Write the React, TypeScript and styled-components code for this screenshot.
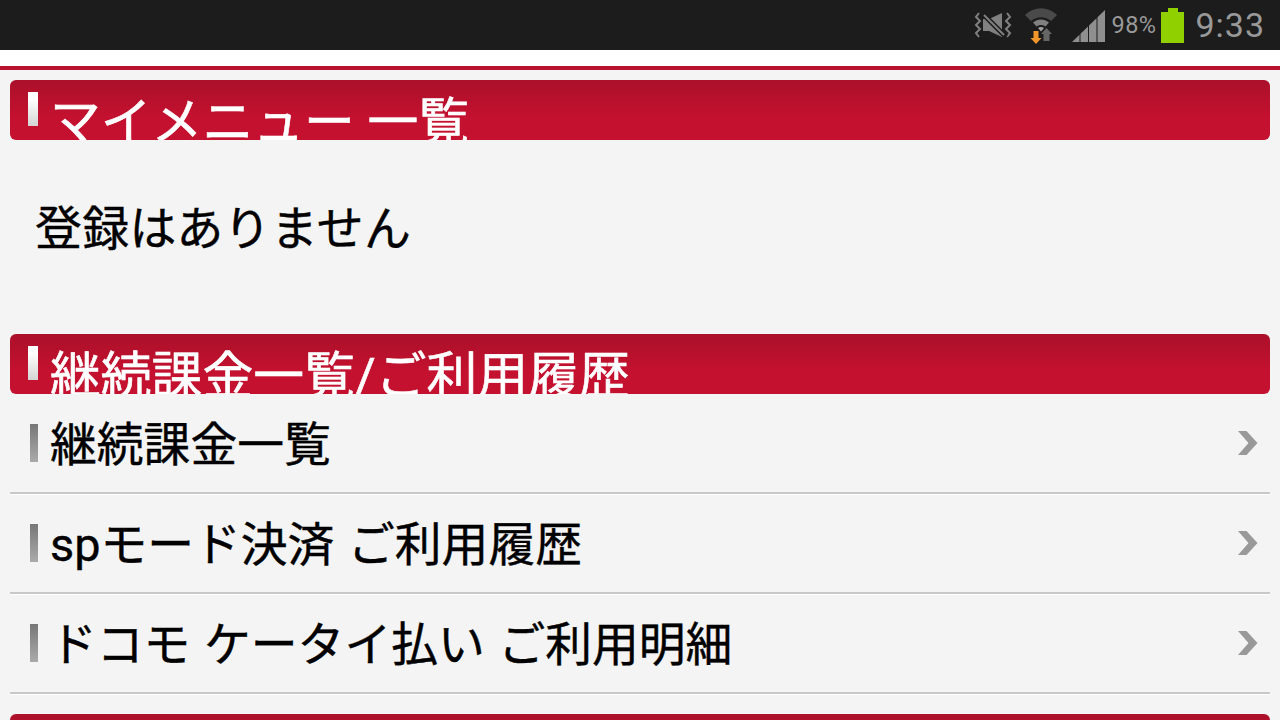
import React from 'react';
import styled, { createGlobalStyle } from 'styled-components';

const FONT = `Roboto, "Noto Sans CJK JP", sans-serif`;

const GlobalStyle = createGlobalStyle`
  html, body {
    margin: 0;
    padding: 0;
    background: #f4f4f4;
  }
  body {
    width: 1280px;
    height: 720px;
    overflow: hidden;
    font-family: ${FONT};
  }
`;

const Page = styled.div`
  display: flex;
  flex-direction: column;
  width: 1280px;
  height: 720px;
  overflow: hidden;
  background: #f4f4f4;
`;

const StatusBar = styled.div`
  flex: none;
  display: flex;
  align-items: center;
  justify-content: flex-end;
  height: 50px;
  padding-right: 15px;
  background: #1c1c1c;
  color: #999999;
`;

const StatusIcon = styled.svg<{ $gap: number }>`
  display: block;
  flex: none;
  margin-right: ${(props) => props.$gap}px;
`;

const Percent = styled.span`
  margin-right: 5px;
  font-size: 23.5px;
  letter-spacing: 0.4px;
`;

const Clock = styled.span`
  margin-left: 11px;
  font-size: 34px;
  line-height: 50px;
  letter-spacing: 1px;
`;

const TopStrip = styled.div`
  flex: none;
  height: 16px;
  background: #ffffff;
  border-bottom: 4px solid #b9122f;
`;

const Content = styled.main`
  display: flex;
  flex-direction: column;
  padding: 10px 10px 0;
`;

const SectionHeader = styled.h2`
  flex: none;
  display: flex;
  align-items: flex-start;
  height: 60px;
  margin: 0;
  padding: 12px 0 0 18px;
  box-sizing: border-box;
  overflow: hidden;
  border-radius: 6px;
  background: linear-gradient(#ab102a, #c3112f 60%, #c3112f);
  color: #ffffff;
  font-size: 50.8px;
  font-weight: 400;
  line-height: 61px;
  white-space: pre;
  -webkit-text-stroke: 0.6px #ffffff;
`;

const HeaderMark = styled.span`
  flex: none;
  width: 10px;
  height: 34px;
  margin-right: 12px;
  background: linear-gradient(#ffffff 20%, #d4d4d4);
`;

const EmptyNote = styled.p`
  flex: none;
  height: 194px;
  margin: 0;
  padding-left: 25px;
  color: #000000;
  font-size: 46.8px;
  letter-spacing: 0.4px;
  line-height: 178px;
  -webkit-text-stroke: 0.4px #000000;
`;

const MenuList = styled.ul`
  flex: none;
  margin: 0 0 20px;
  padding: 0;
  list-style: none;
`;

const MenuRow = styled.li`
  display: flex;
  align-items: center;
  height: 100px;
  padding: 0 12px 0 20px;
  box-sizing: border-box;
  border-bottom: 2px solid #c8c8c8;
  box-shadow: 0 1px 0 #ffffff;
  color: #000000;
  font-size: 46.8px;
  word-spacing: 2px;
  white-space: pre;
`;

const RowMark = styled.span`
  flex: none;
  width: 8px;
  height: 38px;
  margin-right: 12px;
  background: linear-gradient(#777777, #aaaaaa);
`;

const RowLabel = styled.span`
  flex: 1;
  padding-bottom: 6px;
  -webkit-text-stroke: 0.4px #000000;
`;

const Chevron = () => (
  <svg width="20" height="24" viewBox="0 0 20 24">
    <path d="M0 0H8.5L19.5 12L8.5 24H0L10.500 12Z" fill="#999999" />
  </svg>
);

const MuteIcon = () => (
  <StatusIcon $gap={13} width="38" height="26" viewBox="0 0 38 26">
    <g fill="none" stroke="#808080" strokeWidth="2">
      <path d="M5 1L2 5L6 9L2 13L6 17L2 21L5 25" />
      <path d="M33 1L36 5L32 9L36 13L32 17L36 21L33 25" />
    </g>
    <path d="M9 7H15L28 1V25L15 19H9Z" fill="#808080" />
    <path d="M8 1L32 25" stroke="#1c1c1c" strokeWidth="5" />
    <path d="M10 3L30 23" stroke="#808080" strokeWidth="2" />
  </StatusIcon>
);

const WifiIcon = () => (
  <StatusIcon $gap={13} width="34" height="38" viewBox="0 0 34 38">
    <path d="M0 9C9 0 23 0 32 9L26 15C20 10 12 10 6 15Z" fill="#4a4a4a" />
    <path d="M8 16.500C13 12.500 19 12.500 24 16.500L20.500 20.500C18 18.500 14 18.500 11.500 20.500Z" fill="#808080" />
    <path d="M13 22C15 20.500 17 20.500 19 22L16 25.500Z" fill="#a0a0a0" />
    <path d="M21.500 22L27 28H24.500V35H18.500V28H16Z" fill="#666666" />
    <path d="M8.500 25H13.500V32H16.500L11 38L5.500 32H8.500Z" fill="#f0962a" />
  </StatusIcon>
);

const SignalIcon = () => (
  <StatusIcon $gap={7} width="33" height="34" viewBox="0 0 33 34">
    <path d="M0 34L7.500 26.700V34Z" fill="#8f8f8f" />
    <path d="M8.500 25.800L16 18.500V34H8.500Z" fill="#8f8f8f" />
    <path d="M17 17.500L24.500 10.200V34H17Z" fill="#8f8f8f" />
    <path d="M25.500 9.300L33 2V34H25.500Z" fill="#8f8f8f" />
  </StatusIcon>
);

const BatteryIcon = () => (
  <StatusIcon $gap={0} width="23" height="35" viewBox="0 0 23 35">
    <path d="M7 0H17V4H23V35H0V4H7Z" fill="#90cf00" />
  </StatusIcon>
);

const rows = ['継続課金一覧', 'spモード決済 ご利用履歴', 'ドコモ ケータイ払い ご利用明細'];

const App = () => (
  <Page>
    <GlobalStyle />
    <StatusBar>
      <MuteIcon />
      <WifiIcon />
      <SignalIcon />
      <Percent>98%</Percent>
      <BatteryIcon />
      <Clock>9:33</Clock>
    </StatusBar>
    <TopStrip />
    <Content>
      <SectionHeader>
        <HeaderMark />
        マイメニュー 一覧
      </SectionHeader>
      <EmptyNote>登録はありません</EmptyNote>
      <SectionHeader>
        <HeaderMark />
        継続課金一覧/ご利用履歴
      </SectionHeader>
      <MenuList>
        {rows.map((label) => (
          <MenuRow key={label}>
            <RowMark />
            <RowLabel>{label}</RowLabel>
            <Chevron />
          </MenuRow>
        ))}
      </MenuList>
      <SectionHeader />
    </Content>
  </Page>
);

export default App;
